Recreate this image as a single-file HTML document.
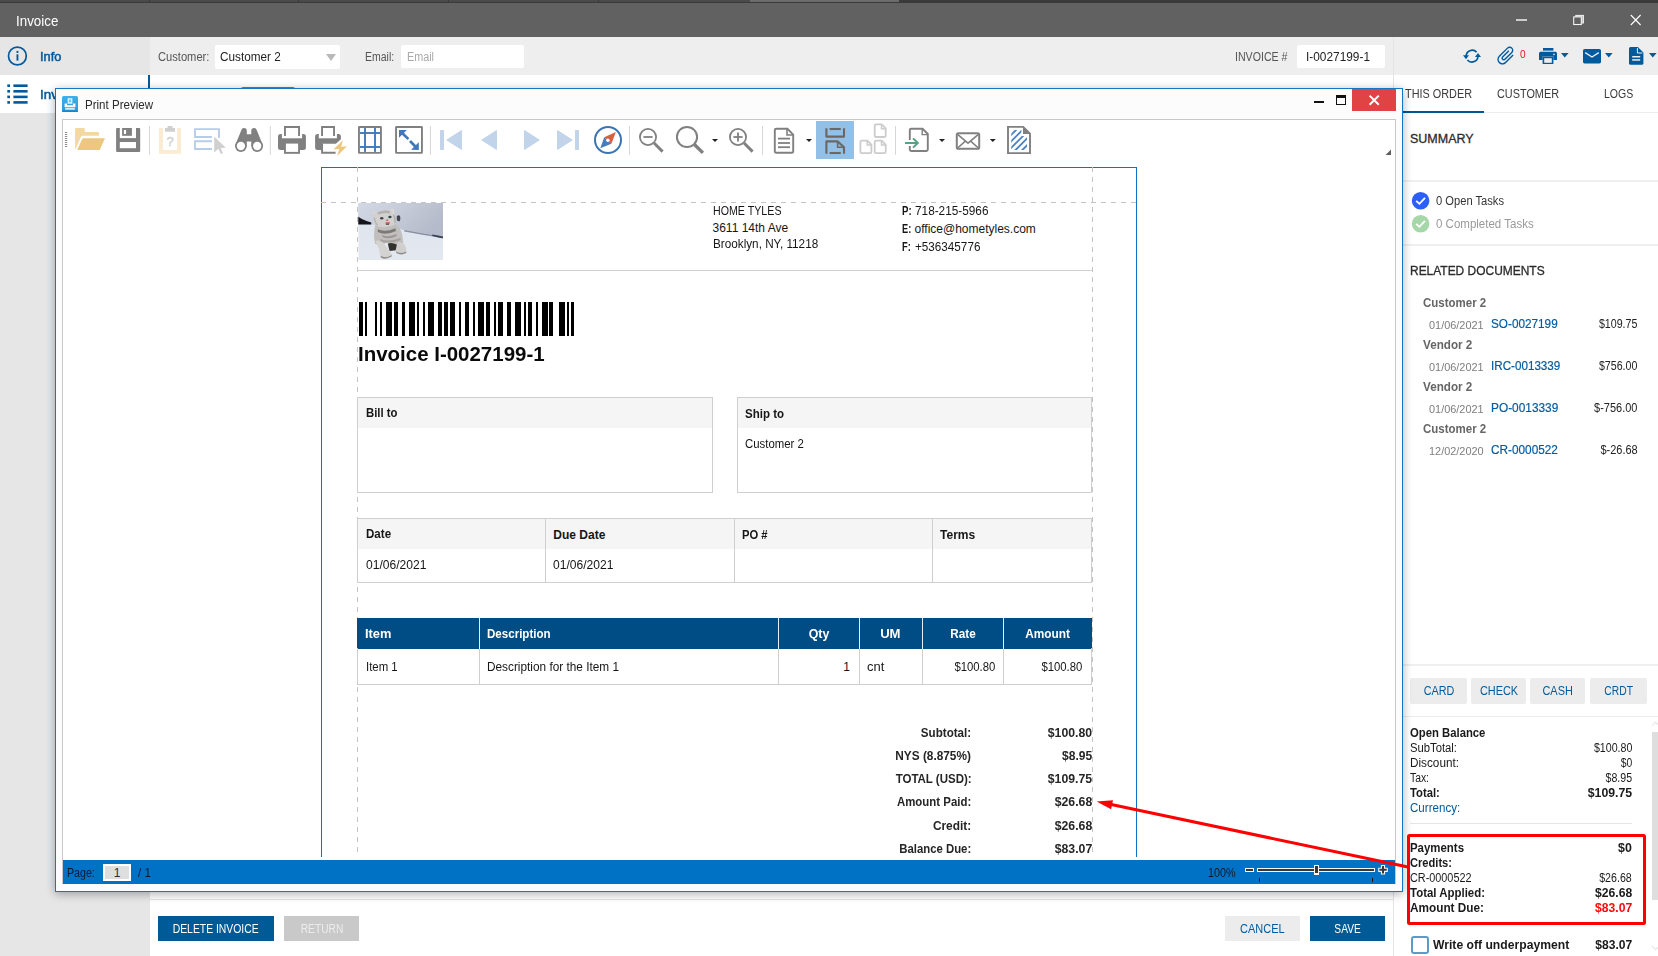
<!DOCTYPE html>
<html><head><meta charset="utf-8"><title>Invoice</title>
<style>
html,body{margin:0;padding:0;background:#fff;}
body{width:1658px;height:956px;overflow:hidden;position:relative;font-family:"Liberation Sans",sans-serif;}
#root{position:absolute;left:0;top:0;width:1658px;height:956px;overflow:hidden;}
#root span{white-space:nowrap;display:block;}
</style></head><body><div id="root">
<div style="position:absolute;left:0px;top:0px;width:1658px;height:956px;background:#ffffff;"></div>
<div style="position:absolute;left:0px;top:0px;width:1658px;height:3px;background:#3a3a3a;"></div>
<div style="position:absolute;left:0px;top:0px;width:750px;height:2px;background:#4a4a4a;"></div>
<div style="position:absolute;left:750px;top:0px;width:149px;height:2px;background:#6c6c6c;"></div>
<div style="position:absolute;left:149px;top:0px;width:1px;height:2px;background:#3a3a3a;"></div>
<div style="position:absolute;left:298px;top:0px;width:1px;height:2px;background:#3a3a3a;"></div>
<div style="position:absolute;left:448px;top:0px;width:1px;height:2px;background:#3a3a3a;"></div>
<div style="position:absolute;left:598px;top:0px;width:1px;height:2px;background:#3a3a3a;"></div>
<div style="position:absolute;left:0px;top:3px;width:1658px;height:34px;background:#616161;"></div>
<span style="position:absolute;left:16.30px;top:13px;line-height:16px;font-size:14px;font-weight:400;color:#ffffff;transform:scaleX(0.9558);transform-origin:0 0;">Invoice</span>
<div style="position:absolute;left:0px;top:37px;width:150px;height:38px;background:#e6e6e6;"></div>
<div style="position:absolute;left:150px;top:37px;width:1508px;height:38px;background:#eeeeee;"></div>
<div style="position:absolute;left:0px;top:75px;width:148px;height:38px;background:#ffffff;"></div>
<div style="position:absolute;left:0px;top:113px;width:150px;height:843px;background:#e6e6e6;"></div>
<div style="position:absolute;left:148px;top:75px;width:2px;height:38px;background:#005a9e;"></div>
<div style="position:absolute;left:150px;top:75px;width:1244px;height:881px;background:#ffffff;"></div>
<div style="position:absolute;left:150px;top:899px;width:1244px;height:1px;background:#e2e2e2;"></div>
<div style="position:absolute;left:1393px;top:37px;width:1px;height:919px;background:#e4e4e4;"></div>
<div style="position:absolute;left:240.5px;top:86.6px;width:54.6px;height:3px;background:#37a24e;border-radius:2px 2px 0 0;"></div>
<span style="position:absolute;left:158.30px;top:50px;line-height:14px;font-size:12px;font-weight:400;color:#555555;transform:scaleX(0.9287);transform-origin:0 0;">Customer:</span>
<div style="position:absolute;left:215px;top:44.6px;width:125px;height:24.2px;background:#ffffff;border-radius:2px;"></div>
<span style="position:absolute;left:220.00px;top:49px;line-height:15px;font-size:13px;font-weight:400;color:#222;transform:scaleX(0.9034);transform-origin:0 0;">Customer 2</span>
<svg style="position:absolute;left:325px;top:53px;" width="12" height="9" viewBox="0 0 12 9"><path d="M1 1 L11 1 L6 8 Z" fill="#b9b9b9"/></svg>
<span style="position:absolute;left:365.20px;top:50px;line-height:14px;font-size:12px;font-weight:400;color:#555555;transform:scaleX(0.8758);transform-origin:0 0;">Email:</span>
<div style="position:absolute;left:401px;top:45px;width:123px;height:23px;background:#ffffff;border-radius:2px;"></div>
<span style="position:absolute;left:406.50px;top:50px;line-height:14px;font-size:12px;font-weight:400;color:#a9a9a9;transform:scaleX(0.8998);transform-origin:0 0;">Email</span>
<span style="position:absolute;left:1235.00px;top:50px;line-height:14px;font-size:12px;font-weight:400;color:#555555;transform:scaleX(0.8846);transform-origin:0 0;">INVOICE #</span>
<div style="position:absolute;left:1297px;top:45px;width:88px;height:23px;background:#ffffff;border-radius:2px;"></div>
<span style="position:absolute;left:1305.50px;top:50px;line-height:14px;font-size:12.5px;font-weight:400;color:#222;transform:scaleX(0.9493);transform-origin:0 0;">I-0027199-1</span>
<svg style="position:absolute;left:6px;top:45px;" width="24" height="24" viewBox="0 0 24 24"><circle cx="11.4" cy="11" r="8.9" fill="none" stroke="#005a9e" stroke-width="1.7"/><rect x="10.5" y="9.3" width="1.9" height="6.3" fill="#005a9e"/><rect x="10.5" y="5.9" width="1.9" height="2" fill="#005a9e"/></svg>
<span style="position:absolute;left:40.40px;top:49px;line-height:15px;font-size:13.5px;font-weight:400;color:#005a9e;transform:scaleX(0.9459);transform-origin:0 0;-webkit-text-stroke:0.55px #005a9e;">Info</span>
<svg style="position:absolute;left:7px;top:84px;" width="22" height="20" viewBox="0 0 22 20"><rect x="0.3" y="0.4" width="2.7" height="2.6" fill="#005a9e"/><rect x="6.4" y="0.4" width="14.2" height="2.6" fill="#005a9e"/><rect x="0.3" y="6.0" width="2.7" height="2.6" fill="#005a9e"/><rect x="6.4" y="6.0" width="14.2" height="2.6" fill="#005a9e"/><rect x="0.3" y="11.6" width="2.7" height="2.6" fill="#005a9e"/><rect x="6.4" y="11.6" width="14.2" height="2.6" fill="#005a9e"/><rect x="0.3" y="17.1" width="2.7" height="2.6" fill="#005a9e"/><rect x="6.4" y="17.1" width="14.2" height="2.6" fill="#005a9e"/></svg>
<span style="position:absolute;left:40.40px;top:87px;line-height:15px;font-size:13.5px;font-weight:400;color:#005a9e;transform:scaleX(0.9884);transform-origin:0 0;-webkit-text-stroke:0.55px #005a9e;">Inv</span>
<div style="position:absolute;left:1516px;top:19px;width:11px;height:2px;background:#cdcdcd;"></div>
<svg style="position:absolute;left:1572px;top:14px;" width="13" height="12" viewBox="0 0 13 12"><rect x="3.8" y="1.4" width="7.6" height="7.6" fill="#bdbdbd" stroke="#f2f2f2" stroke-width="1"/><rect x="1.7" y="2.9" width="7.6" height="7.6" fill="#616161" stroke="#f4f4f4" stroke-width="1.1"/></svg>
<svg style="position:absolute;left:1629px;top:13px;" width="14" height="14" viewBox="0 0 14 14"><path d="M1.8 2 L11.6 12 M11.6 2 L1.8 12" stroke="#ffffff" stroke-width="1.1" fill="none"/></svg>
<svg style="position:absolute;left:1462px;top:47px;" width="20" height="18" viewBox="0 0 20 18"><g fill="none" stroke="#005a9e" stroke-width="1.7"><path d="M4.2 9.6 A6 6 0 0 1 14.6 5.2"/><path d="M15.9 8.6 A6 6 0 0 1 5.4 13"/></g><path d="M1 8.2 L7 8.2 L4 12.2 Z" fill="#005a9e"/><path d="M13 10 L19 10 L16 6 Z" fill="#005a9e"/></svg>
<svg style="position:absolute;left:1494px;top:43px;" width="24" height="26" viewBox="0 0 24 26"><g transform="translate(12.05,12.85) rotate(45) scale(0.93) translate(-12.5,-12)"><path fill="#005a9e" d="M16.5 6v11.5c0 2.21-1.79 4-4 4s-4-1.79-4-4V5c0-1.38 1.12-2.5 2.5-2.5s2.5 1.12 2.5 2.5v10.5c0 .55-.45 1-1 1s-1-.45-1-1V6H10v9.5c0 1.38 1.12 2.5 2.5 2.5s2.5-1.12 2.5-2.5V5c0-2.21-1.79-4-4-4S7 2.790 7 5v12.5c0 3.040 2.460 5.5 5.5 5.5s5.5-2.460 5.5-5.5V6h-1.5z"/></g></svg>
<span style="position:absolute;left:1520.20px;top:48px;line-height:12px;font-size:10.5px;font-weight:400;color:#f0141e;transform:scaleX(0.9589);transform-origin:0 0;">0</span>
<svg style="position:absolute;left:1539px;top:48px;" width="18" height="16" viewBox="0 0 18 16"><rect x="4" y="0" width="10.4" height="2.6" fill="#005a9e"/><path d="M1.6 3.8 H16.4 Q18 3.8 18 5.4 V12 H14.4 V8.6 H3.6 V12 H0 V5.4 Q0 3.8 1.6 3.8 Z" fill="#005a9e"/><rect x="4.4" y="9.4" width="9.2" height="6.2" fill="none" stroke="#005a9e" stroke-width="1.6"/><circle cx="15" cy="6.4" r="0.8" fill="#eeeeee"/></svg>
<svg style="position:absolute;left:1561px;top:53px;" width="8" height="5" viewBox="0 0 8 5"><path d="M0 0 H7.6 L3.8 4.5 Z" fill="#005a9e"/></svg>
<svg style="position:absolute;left:1583px;top:49px;" width="18" height="15" viewBox="0 0 18 15"><rect x="0" y="0" width="18" height="14.4" rx="1.6" fill="#005a9e"/><path d="M2.2 3.6 L9 8 L15.8 3.6" fill="none" stroke="#eeeeee" stroke-width="1.3"/></svg>
<svg style="position:absolute;left:1604.8px;top:53px;" width="8" height="5" viewBox="0 0 8 5"><path d="M0 0 H7.6 L3.8 4.5 Z" fill="#005a9e"/></svg>
<svg style="position:absolute;left:1629px;top:47px;" width="15" height="18" viewBox="0 0 15 18"><path d="M1.6 0 H8.8 L14.4 5.6 V16.2 Q14.4 17.8 12.8 17.8 H1.6 Q0 17.8 0 16.2 V1.6 Q0 0 1.6 0 Z" fill="#005a9e"/><path d="M8.4 1 V6 H13.4" fill="none" stroke="#eeeeee" stroke-width="1"/><rect x="3.2" y="9" width="8" height="1.5" fill="#eeeeee"/><rect x="3.2" y="12.2" width="8" height="1.5" fill="#eeeeee"/></svg>
<svg style="position:absolute;left:1649px;top:53px;" width="8" height="5" viewBox="0 0 8 5"><path d="M0 0 H7.6 L3.8 4.5 Z" fill="#005a9e"/></svg>
<span style="position:absolute;left:1404.80px;top:87px;line-height:14px;font-size:12px;font-weight:400;color:#3a3a3a;transform:scaleX(0.9053);transform-origin:0 0;">THIS ORDER</span>
<span style="position:absolute;left:1497.40px;top:87px;line-height:14px;font-size:12px;font-weight:400;color:#3a3a3a;transform:scaleX(0.9057);transform-origin:0 0;">CUSTOMER</span>
<span style="position:absolute;left:1603.50px;top:87px;line-height:14px;font-size:12px;font-weight:400;color:#3a3a3a;transform:scaleX(0.8757);transform-origin:0 0;">LOGS</span>
<div style="position:absolute;left:1403px;top:112px;width:255px;height:1px;background:#ececec;"></div>
<div style="position:absolute;left:1403px;top:110.6px;width:81px;height:2.6px;background:#005593;"></div>
<span style="position:absolute;left:1410.00px;top:132px;line-height:14px;font-size:12.5px;font-weight:400;color:#2b2b2b;-webkit-text-stroke:0.3px #2b2b2b;">SUMMARY</span>
<div style="position:absolute;left:1403px;top:180px;width:255px;height:2px;background:#f0f0f0;"></div>
<svg style="position:absolute;left:1411px;top:191px;" width="20" height="20" viewBox="0 0 20 20"><circle cx="9.6" cy="9.7" r="8.8" fill="#2c5ff6"/><path d="M5.2 9.8 L8.4 12.8 L14 6.8" fill="none" stroke="#fff" stroke-width="1.8"/></svg>
<svg style="position:absolute;left:1411px;top:214px;" width="20" height="20" viewBox="0 0 20 20"><circle cx="9.6" cy="9.7" r="8.8" fill="#a6d7a8"/><path d="M5.2 9.8 L8.4 12.8 L14 6.8" fill="none" stroke="#fff" stroke-width="1.8"/></svg>
<span style="position:absolute;left:1436.00px;top:194px;line-height:14px;font-size:12px;font-weight:400;color:#333;transform:scaleX(0.9295);transform-origin:0 0;">0 Open Tasks</span>
<span style="position:absolute;left:1436.00px;top:217px;line-height:14px;font-size:12px;font-weight:400;color:#9a9a9a;transform:scaleX(0.9594);transform-origin:0 0;">0 Completed Tasks</span>
<div style="position:absolute;left:1403px;top:244px;width:255px;height:2px;background:#f0f0f0;"></div>
<span style="position:absolute;left:1410.40px;top:264px;line-height:14px;font-size:12.5px;font-weight:400;color:#2b2b2b;transform:scaleX(0.9563);transform-origin:0 0;-webkit-text-stroke:0.3px #2b2b2b;">RELATED DOCUMENTS</span>
<span style="position:absolute;left:1423.00px;top:296px;line-height:14px;font-size:12.5px;font-weight:700;color:#666666;transform:scaleX(0.9190);transform-origin:0 0;">Customer 2</span>
<span style="position:absolute;left:1428.50px;top:319px;line-height:12px;font-size:11.5px;font-weight:400;color:#7d7d7d;transform:scaleX(0.9486);transform-origin:0 0;">01/06/2021</span>
<span style="position:absolute;left:1491.00px;top:316px;line-height:15px;font-size:13px;font-weight:400;color:#005a9e;transform:scaleX(0.9047);transform-origin:0 0;-webkit-text-stroke:0.2px #005a9e;">SO-0027199</span>
<span style="position:absolute;left:1594.42px;top:317px;line-height:14px;font-size:12px;font-weight:400;color:#222;transform:scaleX(0.8875);transform-origin:100% 0;">$109.75</span>
<span style="position:absolute;left:1423.00px;top:338px;line-height:14px;font-size:12.5px;font-weight:700;color:#666666;transform:scaleX(0.9338);transform-origin:0 0;">Vendor 2</span>
<span style="position:absolute;left:1428.50px;top:361px;line-height:12px;font-size:11.5px;font-weight:400;color:#7d7d7d;transform:scaleX(0.9486);transform-origin:0 0;">01/06/2021</span>
<span style="position:absolute;left:1491.00px;top:358px;line-height:15px;font-size:13px;font-weight:400;color:#005a9e;transform:scaleX(0.8962);transform-origin:0 0;-webkit-text-stroke:0.2px #005a9e;">IRC-0013339</span>
<span style="position:absolute;left:1594.42px;top:359px;line-height:14px;font-size:12px;font-weight:400;color:#222;transform:scaleX(0.8875);transform-origin:100% 0;">$756.00</span>
<span style="position:absolute;left:1423.00px;top:380px;line-height:14px;font-size:12.5px;font-weight:700;color:#666666;transform:scaleX(0.9338);transform-origin:0 0;">Vendor 2</span>
<span style="position:absolute;left:1428.50px;top:403px;line-height:12px;font-size:11.5px;font-weight:400;color:#7d7d7d;transform:scaleX(0.9486);transform-origin:0 0;">01/06/2021</span>
<span style="position:absolute;left:1491.00px;top:400px;line-height:15px;font-size:13px;font-weight:400;color:#005a9e;transform:scaleX(0.9129);transform-origin:0 0;-webkit-text-stroke:0.2px #005a9e;">PO-0013339</span>
<span style="position:absolute;left:1590.43px;top:401px;line-height:14px;font-size:12px;font-weight:400;color:#222;transform:scaleX(0.9140);transform-origin:100% 0;">$-756.00</span>
<span style="position:absolute;left:1423.00px;top:422px;line-height:14px;font-size:12.5px;font-weight:700;color:#666666;transform:scaleX(0.9190);transform-origin:0 0;">Customer 2</span>
<span style="position:absolute;left:1428.50px;top:445px;line-height:12px;font-size:11.5px;font-weight:400;color:#7d7d7d;transform:scaleX(0.9486);transform-origin:0 0;">12/02/2020</span>
<span style="position:absolute;left:1491.00px;top:442px;line-height:15px;font-size:13px;font-weight:400;color:#005a9e;transform:scaleX(0.9075);transform-origin:0 0;-webkit-text-stroke:0.2px #005a9e;">CR-0000522</span>
<span style="position:absolute;left:1597.10px;top:443px;line-height:14px;font-size:12px;font-weight:400;color:#222;transform:scaleX(0.9164);transform-origin:100% 0;">$-26.68</span>
<div style="position:absolute;left:1403px;top:664px;width:255px;height:2px;background:#f0f0f0;"></div>
<div style="position:absolute;left:1410px;top:678px;width:57px;height:26px;background:#ececec;border-radius:2px;"></div>
<span style="position:absolute;left:1421.50px;top:684px;line-height:14px;font-size:12px;font-weight:400;color:#005a9e;transform:scaleX(0.8999);transform-origin:50% 0;">CARD</span>
<div style="position:absolute;left:1471px;top:678px;width:55px;height:26px;background:#ececec;border-radius:2px;"></div>
<span style="position:absolute;left:1477.50px;top:684px;line-height:14px;font-size:12px;font-weight:400;color:#005a9e;transform:scaleX(0.9094);transform-origin:50% 0;">CHECK</span>
<div style="position:absolute;left:1530px;top:678px;width:55px;height:26px;background:#ececec;border-radius:2px;"></div>
<span style="position:absolute;left:1540.83px;top:684px;line-height:14px;font-size:12px;font-weight:400;color:#005a9e;transform:scaleX(0.9118);transform-origin:50% 0;">CASH</span>
<div style="position:absolute;left:1590px;top:678px;width:57px;height:26px;background:#ececec;border-radius:2px;"></div>
<span style="position:absolute;left:1601.84px;top:684px;line-height:14px;font-size:12px;font-weight:400;color:#005a9e;transform:scaleX(0.8581);transform-origin:50% 0;">CRDT</span>
<div style="position:absolute;left:1403px;top:716px;width:255px;height:1.4px;background:#ececec;"></div>
<span style="position:absolute;left:1410.00px;top:726px;line-height:14px;font-size:12px;font-weight:700;color:#1a1a1a;transform:scaleX(0.9422);transform-origin:0 0;">Open Balance</span>
<span style="position:absolute;left:1410.00px;top:741px;line-height:14px;font-size:12px;font-weight:400;color:#1a1a1a;transform:scaleX(0.9394);transform-origin:0 0;">SubTotal:</span>
<span style="position:absolute;left:1588.62px;top:741px;line-height:14px;font-size:12px;font-weight:400;color:#1a1a1a;transform:scaleX(0.8875);transform-origin:100% 0;">$100.80</span>
<span style="position:absolute;left:1410.00px;top:756px;line-height:14px;font-size:12px;font-weight:400;color:#1a1a1a;transform:scaleX(0.9796);transform-origin:0 0;">Discount:</span>
<span style="position:absolute;left:1618.65px;top:756px;line-height:14px;font-size:12px;font-weight:400;color:#1a1a1a;transform:scaleX(0.8615);transform-origin:100% 0;">$0</span>
<span style="position:absolute;left:1410.00px;top:771px;line-height:14px;font-size:12px;font-weight:400;color:#1a1a1a;transform:scaleX(0.8633);transform-origin:0 0;">Tax:</span>
<span style="position:absolute;left:1601.97px;top:771px;line-height:14px;font-size:12px;font-weight:400;color:#1a1a1a;transform:scaleX(0.8825);transform-origin:100% 0;">$8.95</span>
<span style="position:absolute;left:1410.00px;top:786px;line-height:14px;font-size:12px;font-weight:700;color:#1a1a1a;transform:scaleX(0.9380);transform-origin:0 0;">Total:</span>
<span style="position:absolute;left:1586.81px;top:786px;line-height:14px;font-size:12.5px;font-weight:700;color:#1a1a1a;transform:scaleX(0.9848);transform-origin:100% 0;">$109.75</span>
<span style="position:absolute;left:1410.00px;top:801px;line-height:14px;font-size:12px;font-weight:400;color:#005a9e;transform:scaleX(0.9651);transform-origin:0 0;">Currency:</span>
<div style="position:absolute;left:1410px;top:822.5px;width:222px;height:1px;background:#e6e6e6;"></div>
<span style="position:absolute;left:1410.00px;top:841px;line-height:14px;font-size:12px;font-weight:700;color:#1a1a1a;transform:scaleX(0.9524);transform-origin:0 0;">Payments</span>
<span style="position:absolute;left:1618.10px;top:841px;line-height:14px;font-size:12.5px;font-weight:700;color:#1a1a1a;transform:scaleX(0.9925);transform-origin:100% 0;">$0</span>
<span style="position:absolute;left:1410.00px;top:856px;line-height:14px;font-size:12px;font-weight:700;color:#1a1a1a;transform:scaleX(0.9263);transform-origin:0 0;">Credits:</span>
<span style="position:absolute;left:1410.00px;top:871px;line-height:14px;font-size:12px;font-weight:400;color:#1a1a1a;transform:scaleX(0.9038);transform-origin:0 0;">CR-0000522</span>
<span style="position:absolute;left:1595.30px;top:871px;line-height:14px;font-size:12px;font-weight:400;color:#1a1a1a;transform:scaleX(0.8855);transform-origin:100% 0;">$26.68</span>
<span style="position:absolute;left:1410.00px;top:886px;line-height:14px;font-size:12px;font-weight:700;color:#1a1a1a;transform:scaleX(0.9535);transform-origin:0 0;">Total Applied:</span>
<span style="position:absolute;left:1593.77px;top:886px;line-height:14px;font-size:12.5px;font-weight:700;color:#1a1a1a;transform:scaleX(0.9730);transform-origin:100% 0;">$26.68</span>
<span style="position:absolute;left:1410.00px;top:901px;line-height:14px;font-size:12px;font-weight:700;color:#1a1a1a;transform:scaleX(0.9824);transform-origin:0 0;">Amount Due:</span>
<span style="position:absolute;left:1593.77px;top:901px;line-height:14px;font-size:12.5px;font-weight:700;color:#fa0a0a;transform:scaleX(0.9730);transform-origin:100% 0;">$83.07</span>
<div style="position:absolute;left:1411px;top:936px;width:18px;height:18px;box-sizing:border-box;border:2px solid #5d9bc6;border-radius:3px;background:#fff;"></div>
<span style="position:absolute;left:1432.60px;top:938px;line-height:14px;font-size:12.5px;font-weight:700;color:#1a1a1a;transform:scaleX(0.9724);transform-origin:0 0;">Write off underpayment</span>
<span style="position:absolute;left:1593.57px;top:938px;line-height:14px;font-size:12.5px;font-weight:700;color:#1a1a1a;transform:scaleX(0.9677);transform-origin:100% 0;">$83.07</span>
<div style="position:absolute;left:1652px;top:732px;width:6px;height:168px;background:#dedede;"></div>
<svg style="position:absolute;left:1651px;top:721px;" width="8" height="6" viewBox="0 0 8 6"><path d="M1.2 4.6 L4.6 1.2 L8 4.6" fill="none" stroke="#e4e4e4" stroke-width="1.1"/></svg>
<svg style="position:absolute;left:1651px;top:945px;" width="8" height="6" viewBox="0 0 8 6"><path d="M1.2 1.2 L4.6 4.6 L8 1.2" fill="none" stroke="#e4e4e4" stroke-width="1.1"/></svg>
<div style="position:absolute;left:158px;top:916px;width:116px;height:25px;background:#005a96;"></div>
<span style="position:absolute;left:166.32px;top:922px;line-height:14px;font-size:12px;font-weight:400;color:#fff;transform:scaleX(0.8655);transform-origin:50% 0;">DELETE INVOICE</span>
<div style="position:absolute;left:284px;top:916px;width:75px;height:25px;background:#c9c9c9;"></div>
<span style="position:absolute;left:296.50px;top:922px;line-height:14px;font-size:12px;font-weight:400;color:#ececec;transform:scaleX(0.8500);transform-origin:50% 0;">RETURN</span>
<div style="position:absolute;left:1225px;top:916px;width:75px;height:25px;background:#ececec;"></div>
<span style="position:absolute;left:1238.16px;top:922px;line-height:14px;font-size:12px;font-weight:400;color:#005a9e;transform:scaleX(0.9141);transform-origin:50% 0;">CANCEL</span>
<div style="position:absolute;left:1310px;top:916px;width:75px;height:25px;background:#005a96;"></div>
<span style="position:absolute;left:1331.94px;top:922px;line-height:14px;font-size:12px;font-weight:400;color:#fff;transform:scaleX(0.8514);transform-origin:50% 0;">SAVE</span>
<div style="position:absolute;left:55px;top:88px;width:1348px;height:804px;box-sizing:border-box;border:1.2px solid #1377c9;background:#fcfcfc;box-shadow:0 2px 9px rgba(0,0,0,0.32);"></div>
<div style="position:absolute;left:62px;top:119px;width:1334px;height:765px;box-sizing:border-box;border:1px solid #c8c8c8;border-bottom:none;background:#ffffff;"></div>
<div style="position:absolute;left:321px;top:167px;width:816px;height:690px;box-sizing:border-box;border:1.3px solid #0b72c8;border-bottom:none;background:#fff;"></div>
<div style="position:absolute;left:357px;top:167px;width:1px;height:686px;background:repeating-linear-gradient(to bottom,#c4c4c4 0,#c4c4c4 5px,transparent 5px,transparent 10px);"></div>
<div style="position:absolute;left:1092px;top:167px;width:1px;height:686px;background:repeating-linear-gradient(to bottom,#c4c4c4 0,#c4c4c4 5px,transparent 5px,transparent 10px);"></div>
<div style="position:absolute;left:321px;top:202px;height:1px;width:815px;background:repeating-linear-gradient(to right,#c4c4c4 0,#c4c4c4 5px,transparent 5px,transparent 10px);"></div>
<div style="position:absolute;left:357px;top:270px;width:735px;height:1px;background:#cfcfcf;"></div>
<span style="position:absolute;left:712.50px;top:204px;line-height:14px;font-size:12px;font-weight:400;color:#161616;transform:scaleX(0.8880);transform-origin:0 0;">HOME TYLES</span>
<span style="position:absolute;left:712.50px;top:221px;line-height:14px;font-size:12px;font-weight:400;color:#161616;">3611 14th Ave</span>
<span style="position:absolute;left:712.50px;top:237px;line-height:14px;font-size:12px;font-weight:400;color:#161616;transform:scaleX(0.9774);transform-origin:0 0;">Brooklyn, NY, 11218</span>
<span style="position:absolute;left:902.30px;top:204px;line-height:14px;font-size:12px;font-weight:700;color:#161616;transform:scaleX(0.7999);transform-origin:0 0;">P:</span>
<span style="position:absolute;left:914.50px;top:204px;line-height:14px;font-size:12px;font-weight:400;color:#161616;transform:scaleX(0.9835);transform-origin:0 0;">718-215-5966</span>
<span style="position:absolute;left:902.30px;top:222px;line-height:14px;font-size:12px;font-weight:700;color:#161616;transform:scaleX(0.7666);transform-origin:0 0;">E:</span>
<span style="position:absolute;left:914.50px;top:222px;line-height:14px;font-size:12px;font-weight:400;color:#161616;">office@hometyles.com</span>
<span style="position:absolute;left:902.30px;top:240px;line-height:14px;font-size:12px;font-weight:700;color:#161616;transform:scaleX(0.7769);transform-origin:0 0;">F:</span>
<span style="position:absolute;left:914.50px;top:240px;line-height:14px;font-size:12px;font-weight:400;color:#161616;transform:scaleX(0.9750);transform-origin:0 0;">+536345776</span>
<svg style="position:absolute;left:357.5px;top:203px;" width="85.5" height="57" viewBox="0 0 85 57"><defs>
<filter id="cb" x="-5%" y="-5%" width="110%" height="110%"><feGaussianBlur stdDeviation="0.65"/></filter>
<filter id="cb2" x="-20%" y="-20%" width="140%" height="140%"><feGaussianBlur stdDeviation="1.6"/></filter>
<linearGradient id="pil" x1="0" y1="0" x2="1" y2="0.4"><stop offset="0" stop-color="#d3dae6"/><stop offset="0.5" stop-color="#c6ccd9"/><stop offset="1" stop-color="#b6bbcb"/></linearGradient>
<linearGradient id="bed" x1="0" y1="0" x2="0" y2="1"><stop offset="0" stop-color="#dde3ed"/><stop offset="1" stop-color="#e3e8f0"/></linearGradient>
<clipPath id="cc"><rect x="0" y="0" width="85" height="57"/></clipPath>
</defs>
<g clip-path="url(#cc)">
<rect x="0" y="0" width="85" height="57" fill="url(#bed)"/>
<g filter="url(#cb)">
<path d="M-2 -2 H87 V34 Q62 30 46 27 Q30 23 14 21.5 L-2 21 Z" fill="url(#pil)"/>
<path d="M-2 12 Q3 17 13 19.5 L13 21.5 L-2 21.5 Z" fill="#15151c"/>
<path d="M46 27 Q62 30 87 34 L87 35.5 Q62 31.5 46 28.5 Z" fill="#8a8fa2"/>
<path d="M74 31.5 Q80 32.5 87 34 L87 35.8 Q80 34.5 74 33 Z" fill="#3e4254"/>
<path d="M38.5 13.5 Q40 11.5 41.8 13 Q42.6 15.5 41.4 18.2 Q39.6 18.6 38.6 17 Z" fill="#43444c"/>
</g>
<g filter="url(#cb)">
<path d="M13.4 8.6 Q15.5 7.6 19 10.6 L17 18 Z" fill="#d8d6d3"/>
<path d="M31.6 8.2 Q33.6 4.6 35.2 6.4 Q36.6 10 36.4 15 Z" fill="#dcd9d6"/>
<path d="M15.2 10.5 L17.6 16 L18.4 11.8 Z" fill="#d9c3ba"/>
<path d="M33.4 7.6 L35.2 13 L32 10.6 Z" fill="#dcc7bf"/>
<ellipse cx="26.4" cy="16.6" rx="11.2" ry="9.6" fill="#d2d1cf"/>
<path d="M17 22 Q27 27 38 21 Q44 27 44.5 36 L45 40 Q38 41 33 44 L30 38 Q26 40 24 43 L17 41 Q14.5 33 17 22 Z" fill="#c0bfbd"/>
<path d="M19.5 26.3 Q27 29.6 37 25.2 L37.8 28 Q27 33 19.6 29 Z" fill="#7d7975"/>
<path d="M24 32 Q30 35 38 31 L38.4 33 Q30 37 24.2 34 Z" fill="#9b9894"/>
<path d="M17 38 Q22 36 27 42 Q31 48 33.8 51.6 Q30 55 26 55.4 Q22.6 55 22 52.4 Q21.4 46 17 38 Z" fill="#d4d3d1"/>
<path d="M40 39 Q44 38.6 46.4 41.6 Q48.6 45.6 48 48.4 Q44.4 51 40 50.4 Q37.4 49.6 37.2 47.6 Q37.8 43.6 40 39 Z" fill="#d0cfcd"/>
<path d="M29.6 40.4 Q34 39 38.6 41.4 Q38 45.6 37.2 47.6 Q33.6 47.4 31.4 48 Q30.2 44 29.6 40.4 Z" fill="#33322f"/>
<path d="M38 48.4 Q43 51.4 48.2 48.6 L48 50 Q43 52.8 38 50 Z" fill="#8e8c89"/>
<path d="M22.4 52.8 Q27 56 33.6 52 L33.4 53.6 Q27 57.4 22.6 54.4 Z" fill="#8f8d8a"/>
<path d="M19 9.6 Q25 6.4 32 8 L31.4 10.4 Q25.6 9.2 20 11.6 Z" fill="#b3b1ae"/><path d="M16.4 14 Q17.4 19 20 22 L18 22.4 Q15.6 18.6 15.4 14.6 Z" fill="#b8b6b3"/><path d="M34.6 12 Q36.4 16 36.2 20.4 L37.6 19.6 Q38 15 36 11.4 Z" fill="#b1afac"/><path d="M22 36 Q30 39.6 42 35 L42.4 37 Q30 42 22.4 38.2 Z" fill="#a5a29e"/><ellipse cx="23.5" cy="15.2" rx="1.7" ry="1.3" fill="#3d4348"/>
<ellipse cx="31.7" cy="14" rx="1.7" ry="1.3" fill="#3d4348"/>
<ellipse cx="29" cy="17.2" rx="1.1" ry="0.9" fill="#c4707a"/>
<path d="M27 19.6 Q29.4 18.6 31.8 19.4 Q31 21.6 29 21.6 Q27.4 21.4 27 19.6 Z" fill="#b8606a"/>
<path d="M27.4 20.8 Q29.2 21.8 31.2 20.6 L30.8 21.6 Q29 22.6 27.6 21.6 Z" fill="#5d5350"/>
</g>
</g></svg>
<svg style="position:absolute;left:358px;top:302px;" width="220" height="34" viewBox="0 0 220 34"><rect x="1" y="0" width="4" height="34" fill="#000"/><rect x="7" y="0" width="2" height="34" fill="#000"/><rect x="17" y="0" width="2" height="34" fill="#000"/><rect x="22" y="0" width="2" height="34" fill="#000"/><rect x="28" y="0" width="6" height="34" fill="#000"/><rect x="36" y="0" width="4" height="34" fill="#000"/><rect x="44" y="0" width="3" height="34" fill="#000"/><rect x="51" y="0" width="6" height="34" fill="#000"/><rect x="59" y="0" width="2" height="34" fill="#000"/><rect x="65" y="0" width="2" height="34" fill="#000"/><rect x="70" y="0" width="6" height="34" fill="#000"/><rect x="80" y="0" width="4" height="34" fill="#000"/><rect x="86" y="0" width="4" height="34" fill="#000"/><rect x="92" y="0" width="5" height="34" fill="#000"/><rect x="101" y="0" width="2" height="34" fill="#000"/><rect x="107" y="0" width="4" height="34" fill="#000"/><rect x="115" y="0" width="2" height="34" fill="#000"/><rect x="120" y="0" width="6" height="34" fill="#000"/><rect x="128" y="0" width="4" height="34" fill="#000"/><rect x="136" y="0" width="2" height="34" fill="#000"/><rect x="140" y="0" width="5" height="34" fill="#000"/><rect x="149" y="0" width="4" height="34" fill="#000"/><rect x="157" y="0" width="6" height="34" fill="#000"/><rect x="166" y="0" width="2" height="34" fill="#000"/><rect x="170" y="0" width="4" height="34" fill="#000"/><rect x="178" y="0" width="2" height="34" fill="#000"/><rect x="184" y="0" width="6" height="34" fill="#000"/><rect x="191" y="0" width="4" height="34" fill="#000"/><rect x="201" y="0" width="6" height="34" fill="#000"/><rect x="209" y="0" width="2" height="34" fill="#000"/><rect x="213" y="0" width="3" height="34" fill="#000"/></svg>
<span style="position:absolute;left:357.60px;top:343px;line-height:22px;font-size:20px;font-weight:700;color:#0a0a0a;transform:scaleX(1.0234);transform-origin:0 0;">Invoice I-0027199-1</span>
<div style="position:absolute;left:357px;top:397px;width:356px;height:96px;box-sizing:border-box;border:1px solid #cfcfcf;background:#fff;"></div>
<div style="position:absolute;left:358px;top:398px;width:354px;height:30px;background:#f5f5f5;"></div>
<div style="position:absolute;left:737px;top:397px;width:355px;height:96px;box-sizing:border-box;border:1px solid #cfcfcf;background:#fff;"></div>
<div style="position:absolute;left:738px;top:398px;width:353px;height:30px;background:#f5f5f5;"></div>
<span style="position:absolute;left:365.80px;top:406px;line-height:14px;font-size:12px;font-weight:700;color:#161616;transform:scaleX(0.9451);transform-origin:0 0;">Bill to</span>
<span style="position:absolute;left:744.80px;top:407px;line-height:14px;font-size:12px;font-weight:700;color:#161616;transform:scaleX(0.9592);transform-origin:0 0;">Ship to</span>
<span style="position:absolute;left:744.80px;top:437px;line-height:14px;font-size:12px;font-weight:400;color:#161616;transform:scaleX(0.9480);transform-origin:0 0;">Customer 2</span>
<div style="position:absolute;left:357px;top:518px;width:735px;height:65px;box-sizing:border-box;border:1px solid #cfcfcf;background:#fff;"></div>
<div style="position:absolute;left:358px;top:519px;width:733px;height:30px;background:#f5f5f5;"></div>
<div style="position:absolute;left:545px;top:519px;width:1px;height:63px;background:#cfcfcf;"></div>
<div style="position:absolute;left:734px;top:519px;width:1px;height:63px;background:#cfcfcf;"></div>
<div style="position:absolute;left:932px;top:519px;width:1px;height:63px;background:#cfcfcf;"></div>
<span style="position:absolute;left:365.80px;top:527px;line-height:14px;font-size:12px;font-weight:700;color:#161616;transform:scaleX(0.9650);transform-origin:0 0;">Date</span>
<span style="position:absolute;left:553.30px;top:528px;line-height:14px;font-size:12px;font-weight:700;color:#161616;">Due Date</span>
<span style="position:absolute;left:742.30px;top:528px;line-height:14px;font-size:12px;font-weight:700;color:#161616;transform:scaleX(0.9362);transform-origin:0 0;">PO #</span>
<span style="position:absolute;left:940.00px;top:528px;line-height:14px;font-size:12px;font-weight:700;color:#161616;transform:scaleX(1.0049);transform-origin:0 0;">Terms</span>
<span style="position:absolute;left:366.00px;top:558px;line-height:14px;font-size:12px;font-weight:400;color:#161616;transform:scaleX(1.0057);transform-origin:0 0;">01/06/2021</span>
<span style="position:absolute;left:553.30px;top:558px;line-height:14px;font-size:12px;font-weight:400;color:#161616;transform:scaleX(1.0057);transform-origin:0 0;">01/06/2021</span>
<div style="position:absolute;left:357px;top:618px;width:735px;height:31px;background:#004d86;"></div>
<div style="position:absolute;left:357px;top:648px;width:735px;height:37px;box-sizing:border-box;border:1px solid #cfcfcf;border-top:none;"></div>
<div style="position:absolute;left:479px;top:618px;width:1px;height:31px;background:#e8eef4;"></div>
<div style="position:absolute;left:479px;top:649px;width:1px;height:35px;background:#cfcfcf;"></div>
<div style="position:absolute;left:778px;top:618px;width:1px;height:31px;background:#e8eef4;"></div>
<div style="position:absolute;left:778px;top:649px;width:1px;height:35px;background:#cfcfcf;"></div>
<div style="position:absolute;left:859px;top:618px;width:1px;height:31px;background:#e8eef4;"></div>
<div style="position:absolute;left:859px;top:649px;width:1px;height:35px;background:#cfcfcf;"></div>
<div style="position:absolute;left:922px;top:618px;width:1px;height:31px;background:#e8eef4;"></div>
<div style="position:absolute;left:922px;top:649px;width:1px;height:35px;background:#cfcfcf;"></div>
<div style="position:absolute;left:1003px;top:618px;width:1px;height:31px;background:#e8eef4;"></div>
<div style="position:absolute;left:1003px;top:649px;width:1px;height:35px;background:#cfcfcf;"></div>
<span style="position:absolute;left:365.30px;top:627px;line-height:14px;font-size:12px;font-weight:700;color:#fff;transform:scaleX(1.0699);transform-origin:0 0;">Item</span>
<span style="position:absolute;left:487.40px;top:627px;line-height:14px;font-size:12px;font-weight:700;color:#fff;transform:scaleX(0.9634);transform-origin:0 0;">Description</span>
<span style="position:absolute;left:808.50px;top:627px;line-height:14px;font-size:12px;font-weight:700;color:#fff;transform:scaleX(1.0298);transform-origin:50% 0;">Qty</span>
<span style="position:absolute;left:881.17px;top:627px;line-height:14px;font-size:12px;font-weight:700;color:#fff;transform:scaleX(1.0931);transform-origin:50% 0;">UM</span>
<span style="position:absolute;left:949.99px;top:627px;line-height:14px;font-size:12px;font-weight:700;color:#fff;transform:scaleX(0.9765);transform-origin:50% 0;">Rate</span>
<span style="position:absolute;left:1024.84px;top:627px;line-height:14px;font-size:12px;font-weight:700;color:#fff;transform:scaleX(0.9885);transform-origin:50% 0;">Amount</span>
<span style="position:absolute;left:366.00px;top:660px;line-height:14px;font-size:12px;font-weight:400;color:#161616;transform:scaleX(0.9506);transform-origin:0 0;">Item 1</span>
<span style="position:absolute;left:487.40px;top:660px;line-height:14px;font-size:12px;font-weight:400;color:#161616;transform:scaleX(0.9846);transform-origin:0 0;">Description for the Item 1</span>
<span style="position:absolute;left:843.13px;top:660px;line-height:14px;font-size:12px;font-weight:400;color:#161616;">1</span>
<span style="position:absolute;left:867.00px;top:660px;line-height:14px;font-size:12px;font-weight:400;color:#161616;transform:scaleX(1.0807);transform-origin:0 0;">cnt</span>
<span style="position:absolute;left:951.92px;top:660px;line-height:14px;font-size:12px;font-weight:400;color:#161616;transform:scaleX(0.9452);transform-origin:100% 0;">$100.80</span>
<span style="position:absolute;left:1038.92px;top:660px;line-height:14px;font-size:12px;font-weight:400;color:#161616;transform:scaleX(0.9452);transform-origin:100% 0;">$100.80</span>
<span style="position:absolute;left:917.14px;top:726px;line-height:14px;font-size:12.5px;font-weight:700;color:#262626;transform:scaleX(0.9287);transform-origin:100% 0;">Subtotal:</span>
<span style="position:absolute;left:1046.81px;top:726px;line-height:14px;font-size:12.5px;font-weight:700;color:#262626;transform:scaleX(0.9826);transform-origin:100% 0;">$100.80</span>
<span style="position:absolute;left:891.40px;top:749px;line-height:14px;font-size:12.5px;font-weight:700;color:#262626;transform:scaleX(0.9462);transform-origin:100% 0;">NYS (8.875%)</span>
<span style="position:absolute;left:1060.72px;top:749px;line-height:14px;font-size:12.5px;font-weight:700;color:#262626;transform:scaleX(0.9654);transform-origin:100% 0;">$8.95</span>
<span style="position:absolute;left:888.67px;top:772px;line-height:14px;font-size:12.5px;font-weight:700;color:#262626;transform:scaleX(0.9197);transform-origin:100% 0;">TOTAL (USD):</span>
<span style="position:absolute;left:1046.81px;top:772px;line-height:14px;font-size:12.5px;font-weight:700;color:#262626;transform:scaleX(0.9826);transform-origin:100% 0;">$109.75</span>
<span style="position:absolute;left:890.05px;top:795px;line-height:14px;font-size:12.5px;font-weight:700;color:#262626;transform:scaleX(0.9145);transform-origin:100% 0;">Amount Paid:</span>
<span style="position:absolute;left:1053.77px;top:795px;line-height:14px;font-size:12.5px;font-weight:700;color:#262626;transform:scaleX(0.9834);transform-origin:100% 0;">$26.68</span>
<span style="position:absolute;left:931.02px;top:819px;line-height:14px;font-size:12.5px;font-weight:700;color:#262626;transform:scaleX(0.9534);transform-origin:100% 0;">Credit:</span>
<span style="position:absolute;left:1053.77px;top:819px;line-height:14px;font-size:12.5px;font-weight:700;color:#262626;transform:scaleX(0.9834);transform-origin:100% 0;">$26.68</span>
<span style="position:absolute;left:892.10px;top:842px;line-height:14px;font-size:12.5px;font-weight:700;color:#262626;transform:scaleX(0.9091);transform-origin:100% 0;">Balance Due:</span>
<span style="position:absolute;left:1053.77px;top:842px;line-height:14px;font-size:12.5px;font-weight:700;color:#262626;transform:scaleX(0.9834);transform-origin:100% 0;">$83.07</span>
<div style="position:absolute;left:63px;top:860px;width:1332px;height:24px;background:#0072c6;"></div>
<svg style="position:absolute;left:62px;top:119px" width="1333" height="42" viewBox="62 119 1333 42"><rect x="64.9" y="132" width="2.3" height="1" fill="#8c8c8c"/><rect x="64.9" y="134" width="2.3" height="1" fill="#8c8c8c"/><rect x="64.9" y="136" width="2.3" height="1" fill="#8c8c8c"/><rect x="64.9" y="138" width="2.3" height="1" fill="#8c8c8c"/><rect x="64.9" y="140" width="2.3" height="1" fill="#8c8c8c"/><rect x="64.9" y="142" width="2.3" height="1" fill="#8c8c8c"/><rect x="64.9" y="144" width="2.3" height="1" fill="#8c8c8c"/><rect x="64.9" y="146" width="2.3" height="1" fill="#8c8c8c"/><rect x="149.05" y="126" width="0.9" height="28.8" fill="#d2d2d2"/><rect x="269.85" y="126" width="0.9" height="28.8" fill="#d2d2d2"/><rect x="429.95" y="126" width="0.9" height="28.8" fill="#d2d2d2"/><rect x="629.15" y="126" width="0.9" height="28.8" fill="#d2d2d2"/><rect x="762.15" y="126" width="0.9" height="28.8" fill="#d2d2d2"/><rect x="895.05" y="126" width="0.9" height="28.8" fill="#d2d2d2"/><path d="M75.1 129 Q75.1 128 76.1 128 H83.8 Q84.8 128 84.8 129 V132.1 H98 Q99 132.1 99 133.1 V135.7 H82.4 Q81.5 135.7 81.1 136.5 L75.5 149.2 L75.1 149.2 Z" fill="#f3d9a0"/><path d="M82.6 138.2 H105 L99.7 149.9 H77.1 Z" fill="#ecc77e"/><rect x="116.1" y="128" width="24.1" height="23.9" rx="1" fill="#808080"/><rect x="119.8" y="128" width="16.2" height="10.1" fill="#fff"/><rect x="122.1" y="128" width="9.8" height="7.8" fill="#808080"/><rect x="123.9" y="129.9" width="2.2" height="4.1" fill="#fff"/><rect x="119.8" y="142" width="16.2" height="6.2" fill="#fff"/><rect x="159" y="128" width="22" height="25.8" rx="0.8" fill="#fbebd2"/><rect x="163" y="127.5" width="14" height="22.5" fill="#fff"/><path d="M165 131.7 V128 H167.5 V126.9 Q167.5 126.1 168.3 126.1 H171.7 Q172.5 126.1 172.5 126.9 V128 H175 V131.7 Z" fill="#d0d0d0"/><text x="170" y="146" font-size="13" font-weight="400" fill="#cfcfcf" stroke="#cfcfcf" stroke-width="0.35" text-anchor="middle" font-family="Liberation Sans, sans-serif">?</text><path d="M212 137 H195 V129.1 H219 V137.9" fill="none" stroke="#b7cde7" stroke-width="1.9"/><path d="M212 141.2 H195 V149 H212" fill="none" stroke="#b7cde7" stroke-width="1.9"/><path d="M214.2 136.6 L225.8 147.8 L220.6 148 L223 153.2 L220.8 154 L218.4 148.8 L214.2 152.4 Z" fill="#d0d0d0"/><path d="M241.3 130.2 Q241.9 128 244 128 Q246.8 128 246.8 130.8 V134.2 H251.3 V130.8 Q251.3 128 254.1 128 Q256.2 128 256.8 130.2 L263 145.6 L257.2 147 L251.3 146 V141.6 H246.8 V146 L240.9 147 L235.1 145.6 Z" fill="#808080"/><circle cx="240.9" cy="146" r="5.9" fill="#808080"/><circle cx="257.2" cy="146" r="5.9" fill="#808080"/><circle cx="240.9" cy="146" r="4.15" fill="#fff"/><circle cx="257.2" cy="146" r="4.15" fill="#fff"/><path d="M280.5 134 H303.4 Q305.9 134 305.9 136.5 V147.4 Q305.9 149.9 303.4 149.9 H280.5 Q278 149.9 278 147.4 V136.5 Q278 134 280.5 134 Z" fill="#808080"/><rect x="281.9" y="133" width="20.2" height="5.3" fill="#fff"/><path d="M284.95 135.9 V126.95 H299.05 V135.9" fill="none" stroke="#808080" stroke-width="1.9"/><rect x="284.95" y="142.65" width="14.1" height="10.2" fill="#fff" stroke="#808080" stroke-width="1.9"/><path d="M317.6 134 H338.4 Q340.9 134 340.9 136.5 V139.3 L335.9 143.7 H322 V149.9 H317.6 Q315.1 149.9 315.1 147.4 V136.5 Q315.1 134 317.6 134 Z" fill="#808080"/><rect x="318.8" y="133" width="18.1" height="5.3" fill="#fff"/><path d="M322.05 135.9 V126.95 H334.05 V135.9" fill="none" stroke="#808080" stroke-width="1.9"/><path d="M322.05 143.7 V152.8 H335.6" fill="none" stroke="#808080" stroke-width="1.9"/><path d="M342.9 140.3 L333.3 149.4 L339.3 148.9 L337.1 155.9 L347 146.3 L341.2 146.8 Z" fill="#fff" stroke="#fff" stroke-width="1.6"/><path d="M342.9 140.3 L333.3 149.4 L339.3 148.9 L337.1 155.9 L347 146.3 L341.2 146.8 Z" fill="#ecc77e"/><rect x="358.95" y="126.95" width="22" height="25.9" rx="0.4" fill="#fff" stroke="#808080" stroke-width="1.9"/><rect x="364.05" y="127.9" width="1.9" height="24" fill="#3f79ba"/><rect x="374.05" y="127.9" width="1.9" height="24" fill="#3f79ba"/><rect x="359.9" y="132.05" width="20.1" height="1.9" fill="#3f79ba"/><rect x="359.9" y="146.05" width="20.1" height="1.9" fill="#3f79ba"/><rect x="396.05" y="126.95" width="25.9" height="25.9" rx="0.4" fill="#fff" stroke="#808080" stroke-width="1.9"/><path d="M402.4 133.2 L408.4 139.1" stroke="#3f79ba" stroke-width="2.7"/><path d="M410 141 L415.6 146.8" stroke="#3f79ba" stroke-width="2.7"/><path d="M399 129.9 L406.8 130.1 L399 137.8 Z" fill="#3f79ba"/><path d="M418.8 142.2 V149.9 L411.1 149.7 Z" fill="#3f79ba"/><g fill="#c1d4ea" stroke="#c1d4ea" stroke-width="1" stroke-linejoin="round"><rect x="440.5" y="130.5" width="3" height="19"/><path d="M446.8 140 L461.5 130.6 V149.4 Z"/><path d="M481.8 140 L496.5 130.6 V149.4 Z"/><path d="M539.2 140 L524.5 130.6 V149.4 Z"/><path d="M572.2 140 L557.5 130.6 V149.4 Z"/><rect x="575.5" y="130.5" width="3" height="19"/></g><circle cx="608" cy="140" r="13" fill="#fff" stroke="#3c74b4" stroke-width="2"/><path d="M615.9 131.9 L604.2 137.3 L611.4 143.8 Z" fill="#d95f3e"/><path d="M600.3 148.2 L604.2 137.3 L611.4 143.8 Z" fill="#477dbb"/><circle cx="607.9" cy="140.3" r="1.7" fill="#fff"/><circle cx="648" cy="137" r="8.1" fill="#fff" stroke="#808080" stroke-width="1.8"/><path d="M654.02751 143.02751 L662.6 151.6" stroke="#808080" stroke-width="2.9"/><path d="M643.4 137 H652.6" stroke="#808080" stroke-width="1.8"/><circle cx="687" cy="137" r="10.1" fill="#fff" stroke="#808080" stroke-width="2.0"/><path d="M694.44171 144.44171 L702.9 152.9" stroke="#808080" stroke-width="3.4"/><circle cx="738" cy="137" r="8.1" fill="#fff" stroke="#808080" stroke-width="1.8"/><path d="M744.02751 143.02751 L752.6 151.6" stroke="#808080" stroke-width="2.9"/><path d="M733.4 137 H742.6" stroke="#808080" stroke-width="1.8"/><path d="M738 132.4 V141.6" stroke="#808080" stroke-width="1.8"/><path d="M712 139 H718 L715 142 Z" fill="#222"/><path d="M806 139 H812 L809 142 Z" fill="#222"/><path d="M939 139 H945 L942 142 Z" fill="#222"/><path d="M989.8 139 H995.8 L992.8 142 Z" fill="#222"/><path d="M776.4 128.8 H787.4 L793.2 134.6 V151.4 Q793.2 152.8 791.8 152.8 H776.4 Q774.8 152.8 774.8 151.4 V130.2 Q774.8 128.8 776.4 128.8 Z" fill="#fff" stroke="#808080" stroke-width="1.9"/><path d="M787 129 V135 H793" fill="none" stroke="#808080" stroke-width="1.6"/><rect x="778" y="137.7" width="12" height="1.8" fill="#808080"/><rect x="778" y="142.1" width="12" height="1.8" fill="#808080"/><rect x="778" y="146.29999999999998" width="12" height="1.8" fill="#808080"/><rect x="816" y="121" width="38" height="38" fill="#92c0e6"/><g fill="none" stroke="#6c6763" stroke-width="2.1" stroke-linejoin="round"><path d="M826.4 128.2 V136.6 H844 V128.2"/><path d="M829.6 129 H840.8"/><path d="M826.4 153.8 V141.4 H837.6 L844 147.2 V153.8"/><path d="M829.6 153 H840.8"/><path d="M837.6 142 V147.2 H843.4" stroke-width="1.6"/></g><path d="M875.9 124.4 H881.6999999999999 L885.6999999999999 128.4 V135.8 Q885.6999999999999 137.0 884.5 137.0 H875.9 Q874.6999999999999 137.0 874.6999999999999 135.8 V125.60000000000001 Q874.6999999999999 124.4 875.9 124.4 Z" fill="#fff" stroke="#cccccc" stroke-width="1.8"/><path d="M881.5 124.80000000000001 V128.8 H885.3" fill="none" stroke="#cccccc" stroke-width="1.5"/><path d="M861.6 140.6 H867.4 L871.4 144.6 V152.0 Q871.4 153.2 870.2 153.2 H861.6 Q860.4 153.2 860.4 152.0 V141.79999999999998 Q860.4 140.6 861.6 140.6 Z" fill="#fff" stroke="#cccccc" stroke-width="1.8"/><path d="M867.2 141.0 V145.0 H871" fill="none" stroke="#cccccc" stroke-width="1.5"/><path d="M875.9 140.6 H881.6999999999999 L885.6999999999999 144.6 V152.0 Q885.6999999999999 153.2 884.5 153.2 H875.9 Q874.6999999999999 153.2 874.6999999999999 152.0 V141.79999999999998 Q874.6999999999999 140.6 875.9 140.6 Z" fill="#fff" stroke="#cccccc" stroke-width="1.8"/><path d="M881.5 141.0 V145.0 H885.3" fill="none" stroke="#cccccc" stroke-width="1.5"/><path d="M909.8 140 V130.2 Q909.8 128.8 911.2 128.8 H922.6 L927.8 134 V149.6 Q927.8 151 926.4 151 H911.2 Q909.8 151 909.8 149.6 V146" fill="#fff" stroke="#808080" stroke-width="1.9"/><path d="M922.2 129 V134.6 H927.6" fill="none" stroke="#808080" stroke-width="1.4"/><path d="M905 143 H917.4 M913 138.4 L917.8 143 L913 147.6" fill="none" stroke="#57a286" stroke-width="2"/><rect x="956.8" y="133.2" width="22.4" height="15.6" rx="1.6" fill="#fff" stroke="#808080" stroke-width="2"/><path d="M957.6 134.4 L968 143.2 L978.4 134.4 M957.6 148 L965.4 141.2 M978.4 148 L970.6 141.2" fill="none" stroke="#808080" stroke-width="1.6"/><defs><clipPath id="wmc"><path d="M1011.2 130 H1021.4 V136 H1027 V150 H1011.2 Z"/></clipPath></defs><path d="M1008 126.9 H1023.2 L1030 133.7 V153.1 H1008 Z" fill="#fff" stroke="#808080" stroke-width="1.9"/><path d="M1023 127 V134 H1030 Z" fill="#808080"/><g clip-path="url(#wmc)"><path d="M991 155 L1021 125" stroke="#4a83c3" stroke-width="1.9"/><path d="M997.5 155 L1027.5 125" stroke="#4a83c3" stroke-width="1.9"/><path d="M1004 155 L1034 125" stroke="#4a83c3" stroke-width="1.9"/><path d="M1010.5 155 L1040.5 125" stroke="#4a83c3" stroke-width="1.9"/><path d="M1017.3 155 L1047.3 125" stroke="#4a83c3" stroke-width="1.9"/></g></svg>
<svg style="position:absolute;left:62px;top:96px;" width="16" height="16" viewBox="0 0 16 16"><defs><linearGradient id="pg" x1="0" y1="0" x2="0" y2="1"><stop offset="0" stop-color="#3fb0e8"/><stop offset="1" stop-color="#239bdc"/></linearGradient></defs><rect width="16" height="16" rx="1.5" fill="url(#pg)"/><rect x="0" y="14.6" width="16" height="1.4" rx="0.7" fill="#1b86c4"/><rect x="5.6" y="2.2" width="4.8" height="5.6" fill="#d9f0fb"/><rect x="7" y="3.6" width="2" height="2.6" fill="#6cc3ee"/><path d="M2.6 7.4 H5 V9.2 H11 V7.4 H13.4 V11.2 H2.6 Z" fill="#fff"/><rect x="3.2" y="12.2" width="9.6" height="1.4" fill="#fff"/></svg>
<span style="position:absolute;left:84.60px;top:98px;line-height:14px;font-size:12px;font-weight:400;color:#2b2b2b;transform:scaleX(0.9619);transform-origin:0 0;">Print Preview</span>
<div style="position:absolute;left:1314px;top:101px;width:10px;height:2px;background:#111;"></div>
<div style="position:absolute;left:1336px;top:95px;width:10px;height:10px;box-sizing:border-box;border:1px solid #111;border-top:3px solid #111;"></div>
<div style="position:absolute;left:1352px;top:89px;width:44px;height:22px;background:#e04343;"></div>
<svg style="position:absolute;left:1367px;top:93px;" width="15" height="15" viewBox="0 0 15 15"><path d="M2.6 2.6 L11.8 11.8 M11.8 2.6 L2.6 11.8" stroke="#fff" stroke-width="2" fill="none"/></svg>
<svg style="position:absolute;left:1385px;top:149px;" width="7" height="7" viewBox="0 0 7 7"><path d="M6 0.6 V6 H0.6 Z" fill="#5f5f5f"/></svg>
<span style="position:absolute;left:67.40px;top:866px;line-height:14px;font-size:12px;font-weight:400;color:#0c1a30;transform:scaleX(0.8865);transform-origin:0 0;">Page:</span>
<div style="position:absolute;left:103px;top:864px;width:28px;height:17px;box-sizing:border-box;border:2px solid #ffffff;background:#dedede;"></div>
<span style="position:absolute;left:113.66px;top:866px;line-height:14px;font-size:12px;font-weight:400;color:#3a2a3a;">1</span>
<span style="position:absolute;left:137.80px;top:866px;line-height:14px;font-size:12px;font-weight:400;color:#0c1a30;transform:scaleX(0.9594);transform-origin:0 0;">/ 1</span>
<span style="position:absolute;left:1207.60px;top:866px;line-height:14px;font-size:12px;font-weight:400;color:#0c1a30;transform:scaleX(0.8993);transform-origin:0 0;">100%</span>
<div style="position:absolute;left:1244.5px;top:867.7px;width:9.4px;height:4.4px;background:#f6f6f6;"></div>
<div style="position:absolute;left:1245.6px;top:868.9px;width:7.2px;height:2px;background:#383838;"></div>
<div style="position:absolute;left:1257px;top:867.7px;width:118px;height:4.4px;background:#f6f6f6;"></div>
<div style="position:absolute;left:1258px;top:868.9px;width:116px;height:2px;background:#383838;"></div>
<div style="position:absolute;left:1314px;top:865px;width:5px;height:9.6px;background:#f8f8f8;"></div>
<div style="position:absolute;left:1315.3px;top:866.2px;width:2.4px;height:7.2px;background:#383838;"></div>
<div style="position:absolute;left:1259px;top:878px;width:1px;height:4px;background:#161616;"></div>
<div style="position:absolute;left:1372px;top:878px;width:1px;height:4px;background:#161616;"></div>
<svg style="position:absolute;left:1377px;top:864px;" width="12" height="12" viewBox="0 0 12 12"><path d="M6 1 V10.6 M1.2 5.8 H10.8" stroke="#f6f6f6" stroke-width="4.2"/><path d="M6 2.1 V9.5 M2.3 5.8 H9.7" stroke="#383838" stroke-width="2"/></svg>
<div style="position:absolute;left:1407px;top:834px;width:239px;height:91px;box-sizing:border-box;border:3px solid #ff0000;border-radius:2.5px;"></div>
<svg style="position:absolute;left:0;top:0;pointer-events:none" width="1658" height="956" viewBox="0 0 1658 956"><line x1="1408.0" y1="867.0" x2="1110.1" y2="804.3" stroke="#ff0000" stroke-width="3"/><polygon points="1096.6,801.5 1113.0,800.3 1111.1,809.3" fill="#ff0000"/></svg>
</div></body></html>
